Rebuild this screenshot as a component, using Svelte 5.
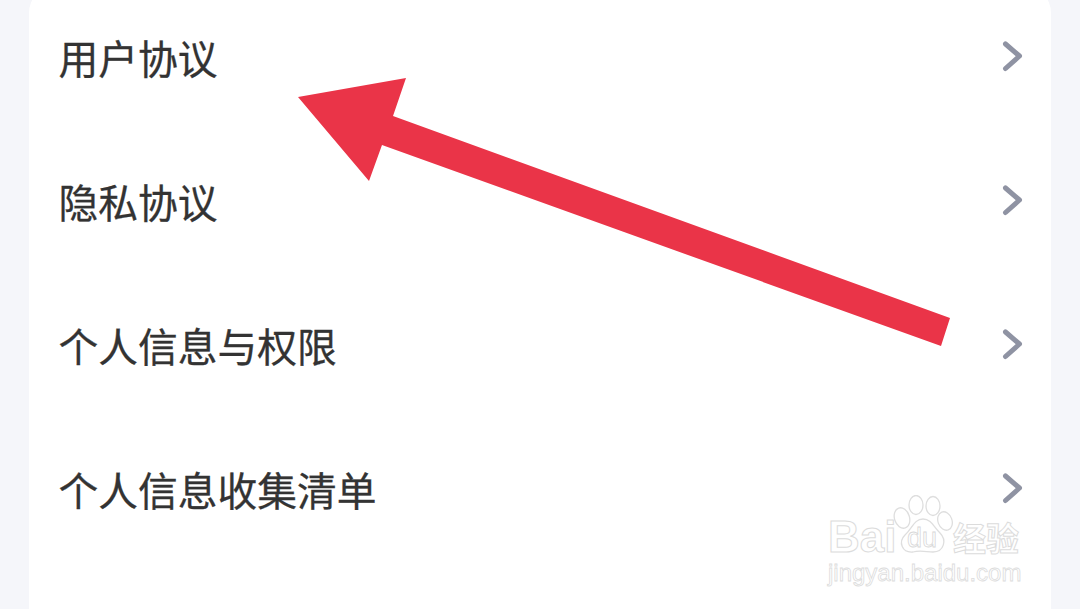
<script>
  const items = ['用户协议', '隐私协议', '个人信息与权限', '个人信息收集清单']
</script>

<div class="page">
  <div class="card">
    {#each items as item}
      <div class="row">
        <span class="label">{item}</span>
        <svg class="chevron" viewBox="0 0 22 32" fill="none">
          <path d="M3.5 3 L17.5 15 L3.5 27.5" stroke="#8f93a3" stroke-width="5" stroke-linecap="round" stroke-linejoin="round" />
        </svg>
      </div>
    {/each}
  </div>

  <svg class="arrow" viewBox="0 0 1080 609">
    <polygon points="298,97 406,78 393,116 950,318 941,346 382,145 369,181" fill="#ea3448" />
  </svg>

  <div class="watermark">
    <div class="brand">
      <span class="bai">Bai</span>
      <span class="paw">
        <svg viewBox="0 0 60 62" fill="#fff" stroke="#dedede" stroke-width="1.3">
          <ellipse cx="9" cy="23" rx="7.5" ry="10.5" transform="rotate(-18 9 23)" />
          <ellipse cx="23" cy="10" rx="7" ry="9.5" />
          <ellipse cx="40" cy="11" rx="7" ry="9.5" />
          <ellipse cx="52" cy="26" rx="7" ry="9.5" transform="rotate(-20 52 26)" />
          <path d="M30 24 C38 24 41 32 47 38 C54 45 51 57 40 57 C34 57 27 55 20 57 C9 58 5 47 12 40 C19 34 21 24 30 24 Z" />
        </svg>
        <span class="du">du</span>
      </span>
      <span class="jingyan">经验</span>
    </div>
    <div class="url">jingyan.baidu.com</div>
  </div>
</div>

<style>
  :global(body) {
    margin: 0;
    background: #f5f6fa;
  }

  .page {
    position: relative;
    width: 1080px;
    height: 609px;
    overflow: hidden;
    padding: 0 29px;
    box-sizing: border-box;
    font-family: "Noto Sans CJK SC", "Liberation Sans", sans-serif;
  }

  .card {
    height: 720px;
    margin-top: -15px;
    background: #fff;
    border-radius: 28px;
    box-sizing: border-box;
  }

  .row {
    height: 144px;
    padding: 0 27px 0 29.5px;
    display: flex;
    align-items: center;
    justify-content: space-between;
  }

  .label {
    font-size: 39.75px;
    line-height: 1;
    color: #333;
    -webkit-text-stroke: 0.3px #333;
  }

  .chevron {
    width: 22px;
    height: 32px;
  }

  .arrow {
    position: absolute;
    left: 0;
    top: 0;
    width: 1080px;
    height: 609px;
  }

  .watermark {
    position: absolute;
    left: 828px;
    top: 493px;
    width: 195px;
    color: #fff;
  }

  .brand {
    display: flex;
    align-items: flex-end;
    height: 64px;
  }

  .bai {
    font-family: "Liberation Sans", sans-serif;
    font-size: 44px;
    font-weight: 700;
    line-height: 40px;
    width: 65px;
    -webkit-text-stroke: 1px #dcdcdc;
  }

  .paw {
    position: relative;
    width: 60px;
    height: 62px;
  }

  .paw svg {
    display: block;
    width: 60px;
    height: 62px;
  }

  .du {
    position: absolute;
    left: 14px;
    top: 31px;
    font-family: "Liberation Sans", sans-serif;
    font-size: 27px;
    line-height: 24px;
    -webkit-text-stroke: 0.8px #d8d8d8;
  }

  .jingyan {
    font-family: "Noto Sans CJK SC", sans-serif;
    font-size: 33px;
    font-weight: 700;
    line-height: 40px;
    white-space: nowrap;
    -webkit-text-stroke: 1px #dcdcdc;
  }

  .url {
    font-family: "Liberation Sans", sans-serif;
    font-size: 24px;
    line-height: 26px;
    margin-top: 3px;
    white-space: nowrap;
    -webkit-text-stroke: 0.8px #dcdcdc;
  }
</style>
